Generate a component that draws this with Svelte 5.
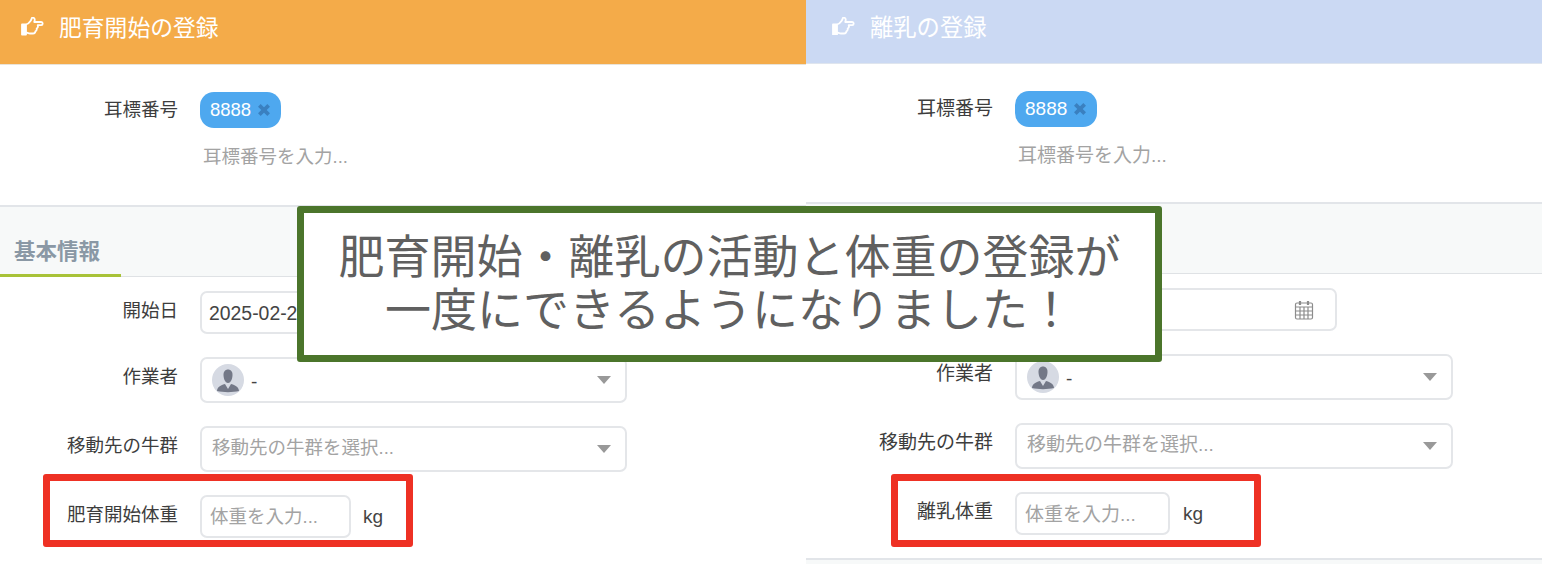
<script>
  const panels = [
    { key: "fatten", title: "肥育開始の登録", weightLabel: "肥育開始体重" },
    { key: "wean", title: "離乳の登録", weightLabel: "離乳体重" }
  ];
</script>

{#snippet caret()}
  <svg class="caret" viewBox="0 0 14 8"><path d="M0 0h14L7 8z" /></svg>
{/snippet}

<div class="page">
  {#each panels as p}
    <section class="panel {p.key}">
      <header class="head">
        <svg class="thumb" viewBox="0 0 23 18.500" fill="none" stroke="#fff" stroke-width="1.800" stroke-linejoin="round">
          <path d="M1 7.500h4v10H1z" fill="#fff" />
          <path d="M5 7.500c2-.5 3.500-2 4.500-3.500.8-1.200 1-2 1.500-3.200 1.600-.6 3 .8 2.700 2.500l-.5 1.700h7c2 0 2 3.200 0 3.200h-3.500c.6 1.600 0 2.800-1 3.400.2 1.300-.3 2.300-1.300 2.700 0 1.300-1 2.200-2.400 2.200H9c-1.500 0-2.500-.8-4-1.200" />
        </svg>
        <span>{p.title}</span>
      </header>

      <div class="ear">
        <span class="label">耳標番号</span>
        <div class="ear-field">
          <span class="tag">8888
            <svg class="tag-x" viewBox="0 0 12 12"><path d="M2 2l8 8M10 2l-8 8" /></svg>
          </span>
          <span class="ear-hint">耳標番号を入力...</span>
        </div>
      </div>

      <div class="section-bar"><span class="tab">基本情報</span></div>

      <div class="form">
        <div class="row">
          <span class="label">開始日</span>
          <div class="box date">
            <span class="value">2025-02-20</span>
            <svg class="cal" viewBox="0 0 20 20" fill="none" stroke="#8c8c8c" stroke-width="1.200">
              <rect x="1.500" y="3" width="17" height="16" rx="1.500" />
              <path d="M1.500 7h17M1.500 11h17M1.500 15h17M6 7v12M10 7v12M14 7v12" />
              <path d="M6 1v4M14 1v4" stroke-width="2.200" />
            </svg>
          </div>
        </div>
        <div class="row">
          <span class="label">作業者</span>
          <div class="box select">
            <svg class="avatar" viewBox="0 0 32 32">
              <circle cx="16" cy="16" r="16" fill="#d6dae3" />
              <path d="M16 5.500c2.800 0 4.500 2.200 4.500 5.200 0 3.500-1.500 8.300-4.500 8.300s-4.500-4.800-4.500-8.300c0-3 1.700-5.200 4.500-5.200z" fill="#737887" />
              <path d="M5 27c.5-4 2.500-5.300 8-7l3 5 3-5c5.500 1.700 7.500 3 8 7-6 1.500-16 1.500-22 0z" fill="#737887" />
            </svg>
            <span class="value dash">-</span>
            {@render caret()}
          </div>
        </div>
        <div class="row">
          <span class="label">移動先の牛群</span>
          <div class="box select">
            <span class="hint">移動先の牛群を選択...</span>
            {@render caret()}
          </div>
        </div>
        <div class="row">
          <span class="label">{p.weightLabel}</span>
          <div class="box weight"><span class="hint">体重を入力...</span></div>
          <span class="unit">kg</span>
        </div>
      </div>
      <div class="foot"></div>
    </section>
  {/each}

  <div class="mark fatten-mark"></div>
  <div class="mark wean-mark"></div>

  <div class="notice">
    肥育開始・離乳の活動と体重の登録が<br />一度にできるようになりました！
  </div>
</div>

<style>
  :global(body) {
    margin: 0;
    background: #fff;
  }

  .page {
    position: relative;
    display: flex;
    width: 1542px;
    height: 564px;
    overflow: hidden;
    font-family: "Liberation Sans", "Noto Sans CJK JP", sans-serif;
    color: #444;
  }

  .panel {
    --label-w: 178px;
    --control-w: 427px;
    --date-w: 320px;
    --weight-w: 151px;
    --head-h: 65px;
    --ear-h: 140px;
    --bar-h: 69px;
    --fs: 18.500px;
    flex: none;
    width: 806px;
    display: flex;
    flex-direction: column;
    font-size: var(--fs);
  }

  .wean {
    --label-w: 187px;
    --control-w: 438px;
    --date-w: 322px;
    --weight-w: 155px;
    --head-h: 64px;
    --ear-h: 138px;
    --fs: 19px;
    width: 736px;
  }

  .head {
    display: flex;
    align-items: center;
    gap: 14px;
    height: var(--head-h);
    padding-left: 21px;
    padding-bottom: 11px;
    box-sizing: border-box;
    background: #f4ab49;
    border-bottom: 1px solid #e9e3d8;
    color: #fff;
    font-size: 22.800px;
    flex: none;
  }

  .wean .head {
    background: #cbd9f3;
    border-bottom-color: #dfe5ee;
    padding-left: 26px;
    font-size: 23.300px;
  }

  .thumb {
    width: 23px;
    height: 18.500px;
    flex: none;
    margin-right: 1px;
  }

  .ear {
    display: flex;
    gap: 22px;
    height: var(--ear-h);
    padding-top: 27px;
    box-sizing: border-box;
    flex: none;
  }

  .label {
    flex: none;
    width: var(--label-w);
    text-align: right;
    line-height: 40px;
    color: #3d3d3d;
    white-space: nowrap;
  }

  .ear .label {
    line-height: 36px;
  }

  .ear-field {
    display: flex;
    flex-direction: column;
    align-items: flex-start;
  }

  .tag {
    display: inline-flex;
    align-items: center;
    gap: 6px;
    height: 36px;
    padding: 0 10px;
    box-sizing: border-box;
    border-radius: 14px;
    background: #4ea8ef;
    color: #fff;
    font-size: var(--fs);
  }

  .tag-x {
    width: 14px;
    height: 14px;
    fill: none;
    stroke: #3a80c0;
    stroke-width: 3.200;
  }

  .ear-hint {
    margin: 15px 0 0 3px;
    line-height: 27px;
    color: #a3a3a3;
  }

  .section-bar {
    display: flex;
    align-items: flex-end;
    height: var(--bar-h);
    background: #f7f9f9;
    border-top: 2px solid #e2e5e9;
    border-bottom: 1px solid #dfe2e5;
    flex: none;
  }

  .tab {
    width: 107px;
    padding-left: 14px;
    height: 38px;
    line-height: 33px;
    margin-bottom: -1px;
    border-bottom: 3px solid #a8c238;
    color: #8a98a5;
    font-weight: 700;
    font-size: 21.500px;
    white-space: nowrap;
  }

  .form {
    display: flex;
    flex-direction: column;
    gap: 23px;
    padding-top: 14px;
    flex: none;
  }

  .row {
    display: flex;
    gap: 22px;
  }

  .box {
    display: flex;
    align-items: center;
    box-sizing: border-box;
    height: 43px;
    border: 2px solid #e4e6e9;
    border-radius: 7px;
    background: #fff;
    padding: 0 12px 0 7px;
  }

  .date {
    width: var(--date-w);
    justify-content: space-between;
  }

  .date .value {
    font-size: 19.400px;
  }

  .cal {
    width: 20px;
    height: 20px;
    margin-right: 9px;
  }

  .select {
    width: var(--control-w);
    height: 46px;
    padding-left: 10px;
  }

  .weight {
    width: var(--weight-w);
    padding-left: 8px;
  }

  .value {
    color: #444;
    font-size: 19px;
    margin-top: 2px;
  }

  .dash {
    margin-top: 4px;
  }

  .hint {
    color: #a3a3a3;
    white-space: nowrap;
    margin-bottom: 7px;
  }

  .weight .hint {
    margin-bottom: 3px;
  }

  .avatar {
    width: 32px;
    height: 32px;
    margin-right: 7px;
    flex: none;
  }

  .caret {
    width: 14px;
    height: 8px;
    margin-left: auto;
    margin-right: 2px;
    fill: #999;
    flex: none;
  }

  .unit {
    margin-left: -10px;
    line-height: 44px;
    font-size: 19px;
    color: #444;
  }

  .wean .unit {
    margin-left: -9px;
  }

  .foot {
    display: none;
  }

  .wean .foot {
    display: block;
    flex: 1;
    margin-top: 22px;
    background: #f7f9f9;
    border-top: 2px solid #e2e5e9;
  }

  .mark {
    position: absolute;
    top: 474px;
    height: 73px;
    box-sizing: border-box;
    border: 7px solid #ee3124;
    border-radius: 3px;
  }

  .fatten-mark {
    left: 43px;
    width: 370px;
  }

  .wean-mark {
    left: 891px;
    width: 370px;
  }

  .notice {
    position: absolute;
    left: 297px;
    top: 206px;
    width: 865px;
    height: 156px;
    box-sizing: border-box;
    padding-top: 14px;
    border: 7px solid #4b752b;
    border-radius: 3px;
    background: #fff;
    color: #606060;
    font-family: "Noto Sans CJK JP", sans-serif;
    font-size: 46px;
    font-weight: 400;
    line-height: 53px;
    text-align: center;
  }
</style>
